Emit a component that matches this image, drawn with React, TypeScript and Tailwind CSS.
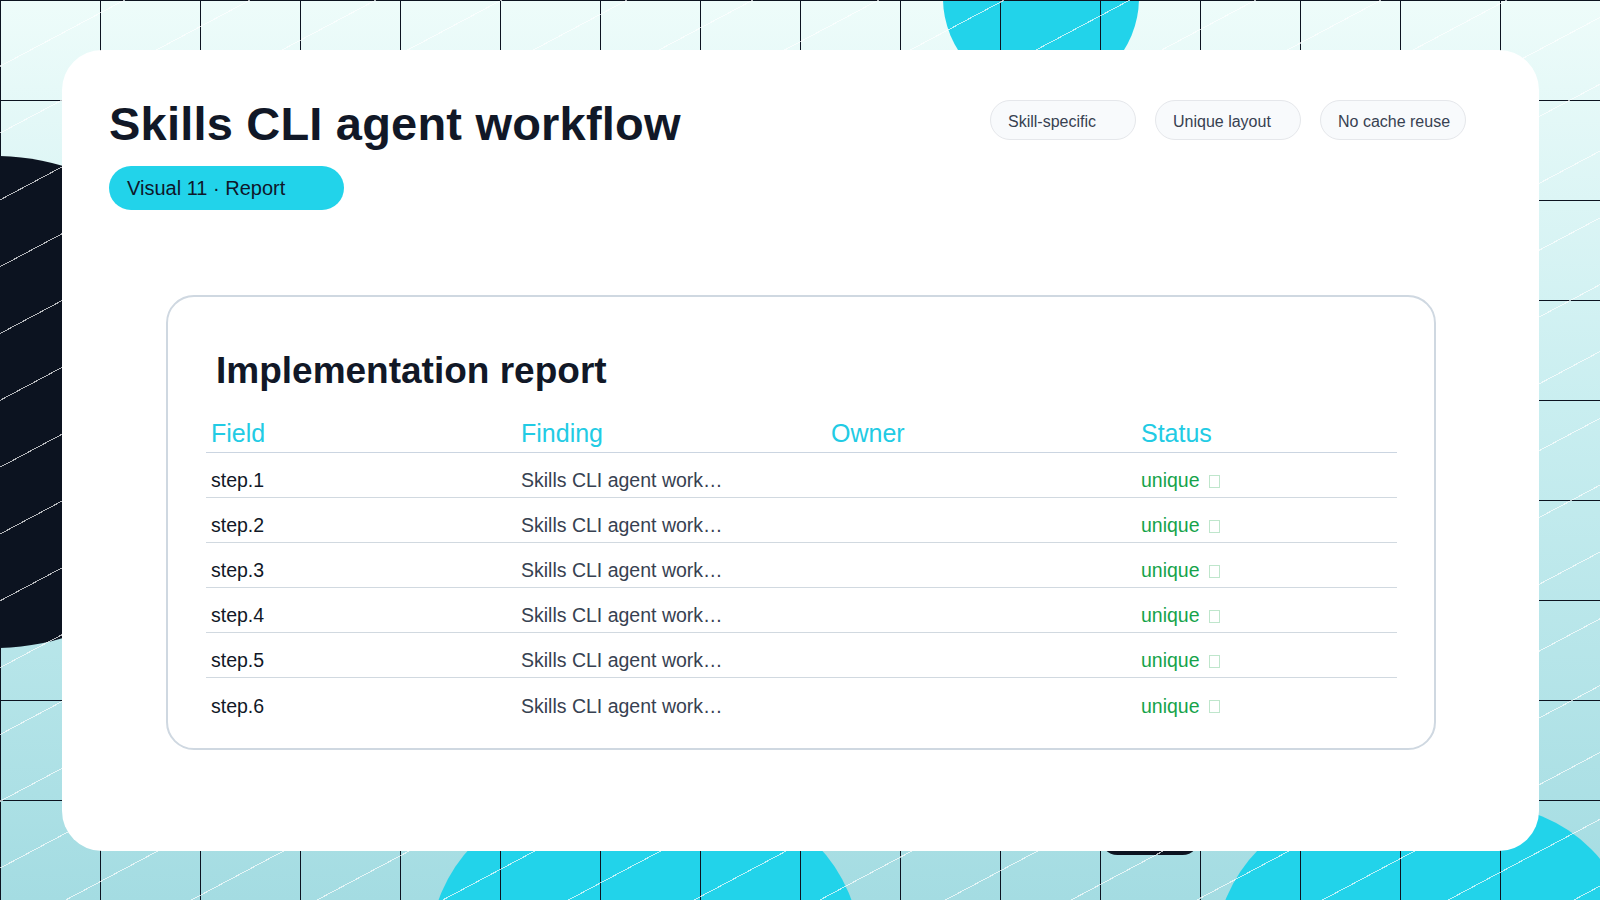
export default function App() {
  const rows = [1, 2, 3, 4, 5, 6];
  return (
    <div className="relative w-[1600px] h-[900px] overflow-hidden bg-[linear-gradient(180deg,#eefcfa_0%,#c9eef0_45%,#a4dce2_100%)]" style={{ fontFamily: '"Liberation Sans", Arial, sans-serif' }}>
      {/* decorative circles */}
      <div className="absolute left-[-260px] top-[156px] w-[500px] h-[492px] rounded-full bg-[#0c1320]" />
      <div className="absolute left-[943px] top-[-100px] w-[196px] h-[196px] rounded-full bg-[#22d3ea]" />
      <div className="absolute left-[430px] top-[800px] w-[430px] h-[300px] rounded-full bg-[#22d3ea]" />
      <div className="absolute left-[1215px] top-[805px] w-[420px] h-[300px] rounded-full bg-[#22d3ea]" />
      <div className="absolute left-[1100px] top-[820px] w-[100px] h-[35px] rounded-full bg-[#0c1320]" />
      {/* grid */}
      <div className="absolute inset-0 bg-[linear-gradient(90deg,#0c1320_1px,transparent_1px),linear-gradient(180deg,#0c1320_1px,transparent_1px)] bg-[size:100px_100px]" />
      {/* diagonal lines */}
      <div className="absolute inset-0 opacity-70 bg-[repeating-linear-gradient(152deg,transparent_0px,transparent_58px,#ffffff_58px,#ffffff_59px)]" />

      <div className="relative mt-[50px] ml-[62px] w-[1477px] h-[801px] rounded-[40px] bg-white px-[47px] pt-[46px]">
        <div className="flex justify-between">
          <div>
            <h1 className="text-[47px] leading-[56px] font-bold text-[#111827] tracking-[0.2px]">Skills CLI agent workflow</h1>
            <div className="mt-[14px] w-[235px] h-[44px] rounded-full bg-[#22d3ea] flex items-center pl-[18px] text-[20px] text-[#0f172a]">Visual 11 · Report</div>
          </div>
          <div className="flex gap-[19px] mt-[4px] mr-[26px]">
            {["Skill-specific", "Unique layout", "No cache reuse"].map((t) => (
              <div key={t} className="w-[146px] h-[40px] rounded-full border border-[#e5e7eb] bg-[#f8fafc] text-[16px] text-[#374151] pl-[17px] pt-[9px]">{t}</div>
            ))}
          </div>
        </div>

        <div className="mt-[85px] ml-[57px] w-[1270px] h-[455px] rounded-[28px] border-2 border-[#cfd8e1] pt-[52px] pl-[38px] pr-[38px]">
          <h2 className="ml-[10px] text-[37px] leading-[44px] font-bold text-[#111827]">Implementation report</h2>
          <div className="mt-[22px] w-[1191px]">
            <div className="grid grid-cols-[310px_310px_310px_1fr] h-[38px] border-b border-[#cbd5e1] text-[25px] text-[#22cbe4] pl-[5px]">
              <div>Field</div><div>Finding</div><div>Owner</div><div>Status</div>
            </div>
            {rows.map((r, i) => (
              <div key={r} className={`grid grid-cols-[310px_310px_310px_1fr] h-[45px] items-center pt-[12px] pl-[5px] text-[19.5px] ${i < rows.length - 1 ? "border-b border-[#d1d9e0]" : ""}`}>
                <div className="text-[#111827]">step.{r}</div>
                <div className="text-[#374151]">Skills CLI agent work…</div>
                <div></div>
                <div className="flex items-center text-[#16a34a]">unique<span className="ml-[9px] inline-block w-[11px] h-[13px] border border-[#bfe6cc]" /></div>
              </div>
            ))}
          </div>
        </div>
      </div>
    </div>
  );
}
